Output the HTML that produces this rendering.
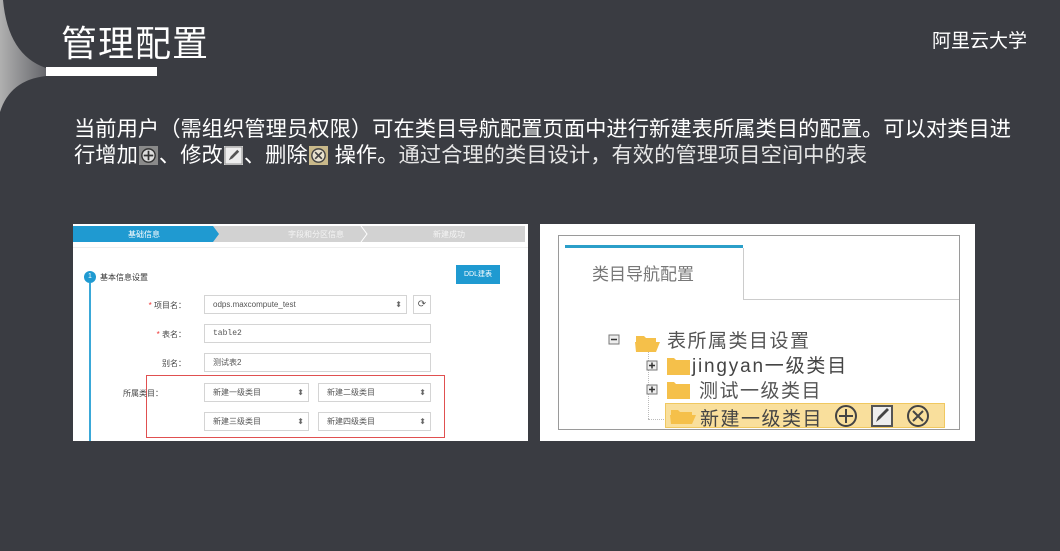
<!DOCTYPE html>
<html><head><meta charset="utf-8"><style>
*{margin:0;padding:0;box-sizing:border-box}
body{width:1060px;height:551px;background:#3a3c42;position:relative;overflow:hidden;font-family:"Liberation Sans","Noto Sans CJK SC",sans-serif}
.a{position:absolute}
.t{color:#fff;white-space:nowrap}
.ico{display:inline-block;width:19px;height:19px;vertical-align:-3px;margin:0 1px}
.lbl{position:absolute;font-size:8px;color:#444;text-align:right;width:50px}
.inp{position:absolute;border:1px solid #d4d4d4;background:#fff;font-size:8px;color:#555;padding-left:8px;line-height:18px}
.sel::after{content:"⬍";position:absolute;right:4px;top:0;font-size:8px;color:#666}
</style></head><body>
<svg class="a" style="left:0;top:0" width="60" height="120">
<defs><linearGradient id="g" x1="0" x2="1"><stop offset="0" stop-color="#b0b0b0"/><stop offset="1" stop-color="#66676c"/></linearGradient></defs>
<path d="M0 0 L3 0 Q8 55 46 68 L46 76 Q10 80 0 112 Z" fill="url(#g)"/>
</svg>
<div class="a t" style="left:61px;top:15px;font-size:36px;letter-spacing:1px">管理配置</div>
<div class="a" style="left:46px;top:67px;width:111px;height:9px;background:#fff"></div>
<div class="a t" style="left:932px;top:26px;font-size:19px">阿里云大学</div>

<div class="a t" style="left:74px;top:116px;font-size:21.3px;line-height:26px">当前用户（需组织管理员权限）可在类目导航配置页面中进行新建表所属类目的配置。可以对类目进</div>
<div class="a t" style="left:74px;top:142px;font-size:21.3px;line-height:26px">行增加<svg class="ico" viewBox="0 0 20 20"><rect width="20" height="20" fill="#8a8a8a"/><circle cx="10" cy="10" r="7" fill="#ddd" stroke="#333" stroke-width="1.5"/><path d="M5 10h10M10 5v10" stroke="#333" stroke-width="1.8"/></svg>、修改<svg class="ico" viewBox="0 0 20 20"><rect width="20" height="20" fill="#eee"/><rect x="1" y="1" width="18" height="18" fill="none" stroke="#888"/><path d="M5 15l2-4 7-7 2 2-7 7z" fill="#555"/></svg>、删除<svg class="ico" viewBox="0 0 20 20"><rect width="20" height="20" fill="#c9b98a"/><circle cx="10" cy="10" r="7" fill="#e8e2cf" stroke="#444" stroke-width="1.5"/><path d="M6.5 6.5l7 7M13.5 6.5l-7 7" stroke="#444" stroke-width="1.8"/></svg> 操作。<span style="color:#e6e6e6">通过合理的类目设计，有效的管理项目空间中的表</span></div>

<!-- left screenshot -->
<div class="a" style="left:73px;top:224px;width:455px;height:217px;background:#fff;overflow:hidden">
  <div class="a" style="left:0;top:2px;width:452px;height:16px;background:#d2d2d2"></div>
  <svg class="a" style="left:0;top:2px" width="452" height="16"><path d="M0 0H140L146 8L140 16H0Z" fill="#1f9ad1"/><path d="M288 0l6 8-6 8" fill="none" stroke="#fff"/></svg>
  <div class="a" style="left:55px;top:5px;font-size:8px;color:#fff">基础信息</div>
  <div class="a" style="left:215px;top:5px;font-size:8px;color:#f4f4f4">字段和分区信息</div>
  <div class="a" style="left:360px;top:5px;font-size:8px;color:#f4f4f4">新建成功</div>
  <div class="a" style="left:0;top:23px;width:455px;height:1px;background:#eee"></div>
  <div class="a" style="left:16px;top:59px;width:2px;height:160px;background:#3aa8d8"></div>
  <div class="a" style="left:11px;top:47px;width:12px;height:12px;border-radius:50%;background:#1f9ad1;color:#fff;font-size:7px;text-align:center;line-height:12px">1</div>
  <div class="a" style="left:27px;top:48px;font-size:8px;color:#333">基本信息设置</div>
  <div class="a" style="left:383px;top:41px;width:44px;height:19px;background:#1f9ad1;color:#fff;font-size:7px;text-align:center;line-height:19px">DDL建表</div>
  <div class="lbl" style="left:63px;top:76px"><span style="color:#e33">*</span> 项目名：</div>
  <div class="inp sel" style="left:131px;top:71px;width:203px;height:19px">odps.maxcompute_test</div>
  <div class="inp" style="left:340px;top:71px;width:18px;height:19px;padding:0;text-align:center;font-size:10px">⟳</div>
  <div class="lbl" style="left:63px;top:105px"><span style="color:#e33">*</span> 表名：</div>
  <div class="inp" style="left:131px;top:100px;width:227px;height:19px;font-family:'Liberation Mono',monospace">table2</div>
  <div class="lbl" style="left:63px;top:134px">别名：</div>
  <div class="inp" style="left:131px;top:129px;width:227px;height:19px">测试表2</div>
  <div class="a" style="left:73px;top:151px;width:299px;height:63px;border:1px solid #e05050"></div>
  <div class="lbl" style="left:40px;top:164px">所属类目：</div>
  <div class="inp sel" style="left:131px;top:159px;width:105px;height:19px">新建一级类目</div>
  <div class="inp sel" style="left:245px;top:159px;width:113px;height:19px">新建二级类目</div>
  <div class="inp sel" style="left:131px;top:188px;width:105px;height:19px">新建三级类目</div>
  <div class="inp sel" style="left:245px;top:188px;width:113px;height:19px">新建四级类目</div>
</div>

<!-- right screenshot -->
<div class="a" style="left:540px;top:224px;width:435px;height:217px;background:#fff">
  <div class="a" style="left:18px;top:11px;width:402px;height:195px;border:1px solid #9a9a9a"></div>
  <div class="a" style="left:25px;top:21px;width:178px;height:3px;background:#2b9fc9"></div>
  <div class="a" style="left:203px;top:24px;width:1px;height:52px;background:#ccc"></div>
  <div class="a" style="left:203px;top:75px;width:216px;height:1px;background:#ccc"></div>
  <div class="a" style="left:52px;top:36px;font-size:17px;color:#777">类目导航配置</div>
  <div class="a" style="left:108px;top:125px;width:1px;height:70px;border-left:1px dotted #bbb"></div>
  <div class="a" style="left:108px;top:195px;width:20px;height:1px;border-top:1px dotted #bbb"></div>
  <svg class="a" style="left:68px;top:108px" width="90" height="100">
    <rect x="1" y="3" width="10" height="9" fill="#eee" stroke="#777"/><path d="M3 7.5h6" stroke="#333" stroke-width="1.5"/>
    <path d="M28 4h8l2 2h10v4H28z M27 10h25l-4 10H28z" fill="#f5c04a"/>
    <rect x="39" y="29" width="10" height="9" fill="#eee" stroke="#777"/><path d="M41 33.5h6M44 30.5v6" stroke="#333" stroke-width="1.5"/>
    <path d="M59 26h7l2 2h14v15H59z" fill="#f5c04a"/>
    <rect x="39" y="53" width="10" height="9" fill="#eee" stroke="#777"/><path d="M41 57.5h6M44 54.5v6" stroke="#333" stroke-width="1.5"/>
    <path d="M59 50h7l2 2h14v15H59z" fill="#f5c04a"/>
  </svg>
  <div class="a" style="left:127px;top:102px;font-size:19px;color:#555;letter-spacing:1.5px">表所属类目设置</div>
  <div class="a" style="left:152px;top:127px;font-size:19px;color:#444;letter-spacing:1.8px">jingyan一级类目</div>
  <div class="a" style="left:159px;top:152px;font-size:19px;color:#555;letter-spacing:1.5px">测试一级类目</div>
  <div class="a" style="left:125px;top:179px;width:280px;height:25px;background:#f9df9c;border:1px solid #f0c860"></div>
  <svg class="a" style="left:129px;top:183px" width="30" height="18"><path d="M2 3h7l2 2h12v3H2z M1 8h26l-4 9H2z" fill="#f5c04a"/></svg>
  <div class="a" style="left:160px;top:180px;font-size:19px;color:#444;letter-spacing:1.5px">新建一级类目</div>
  <svg class="a" style="left:293px;top:180px" width="110" height="24">
    <circle cx="13" cy="12" r="10" fill="none" stroke="#444" stroke-width="2"/><path d="M6 12h14M13 5v14" stroke="#444" stroke-width="2"/>
    <rect x="39" y="2" width="20" height="20" fill="#eee" stroke="#555" stroke-width="2"/><path d="M43 18l2-5 9-9 2 2-9 9z" fill="#444"/>
    <circle cx="85" cy="12" r="10" fill="none" stroke="#444" stroke-width="2"/><path d="M80 7l10 10M90 7l-10 10" stroke="#444" stroke-width="2"/>
  </svg>
</div>
</body></html>
